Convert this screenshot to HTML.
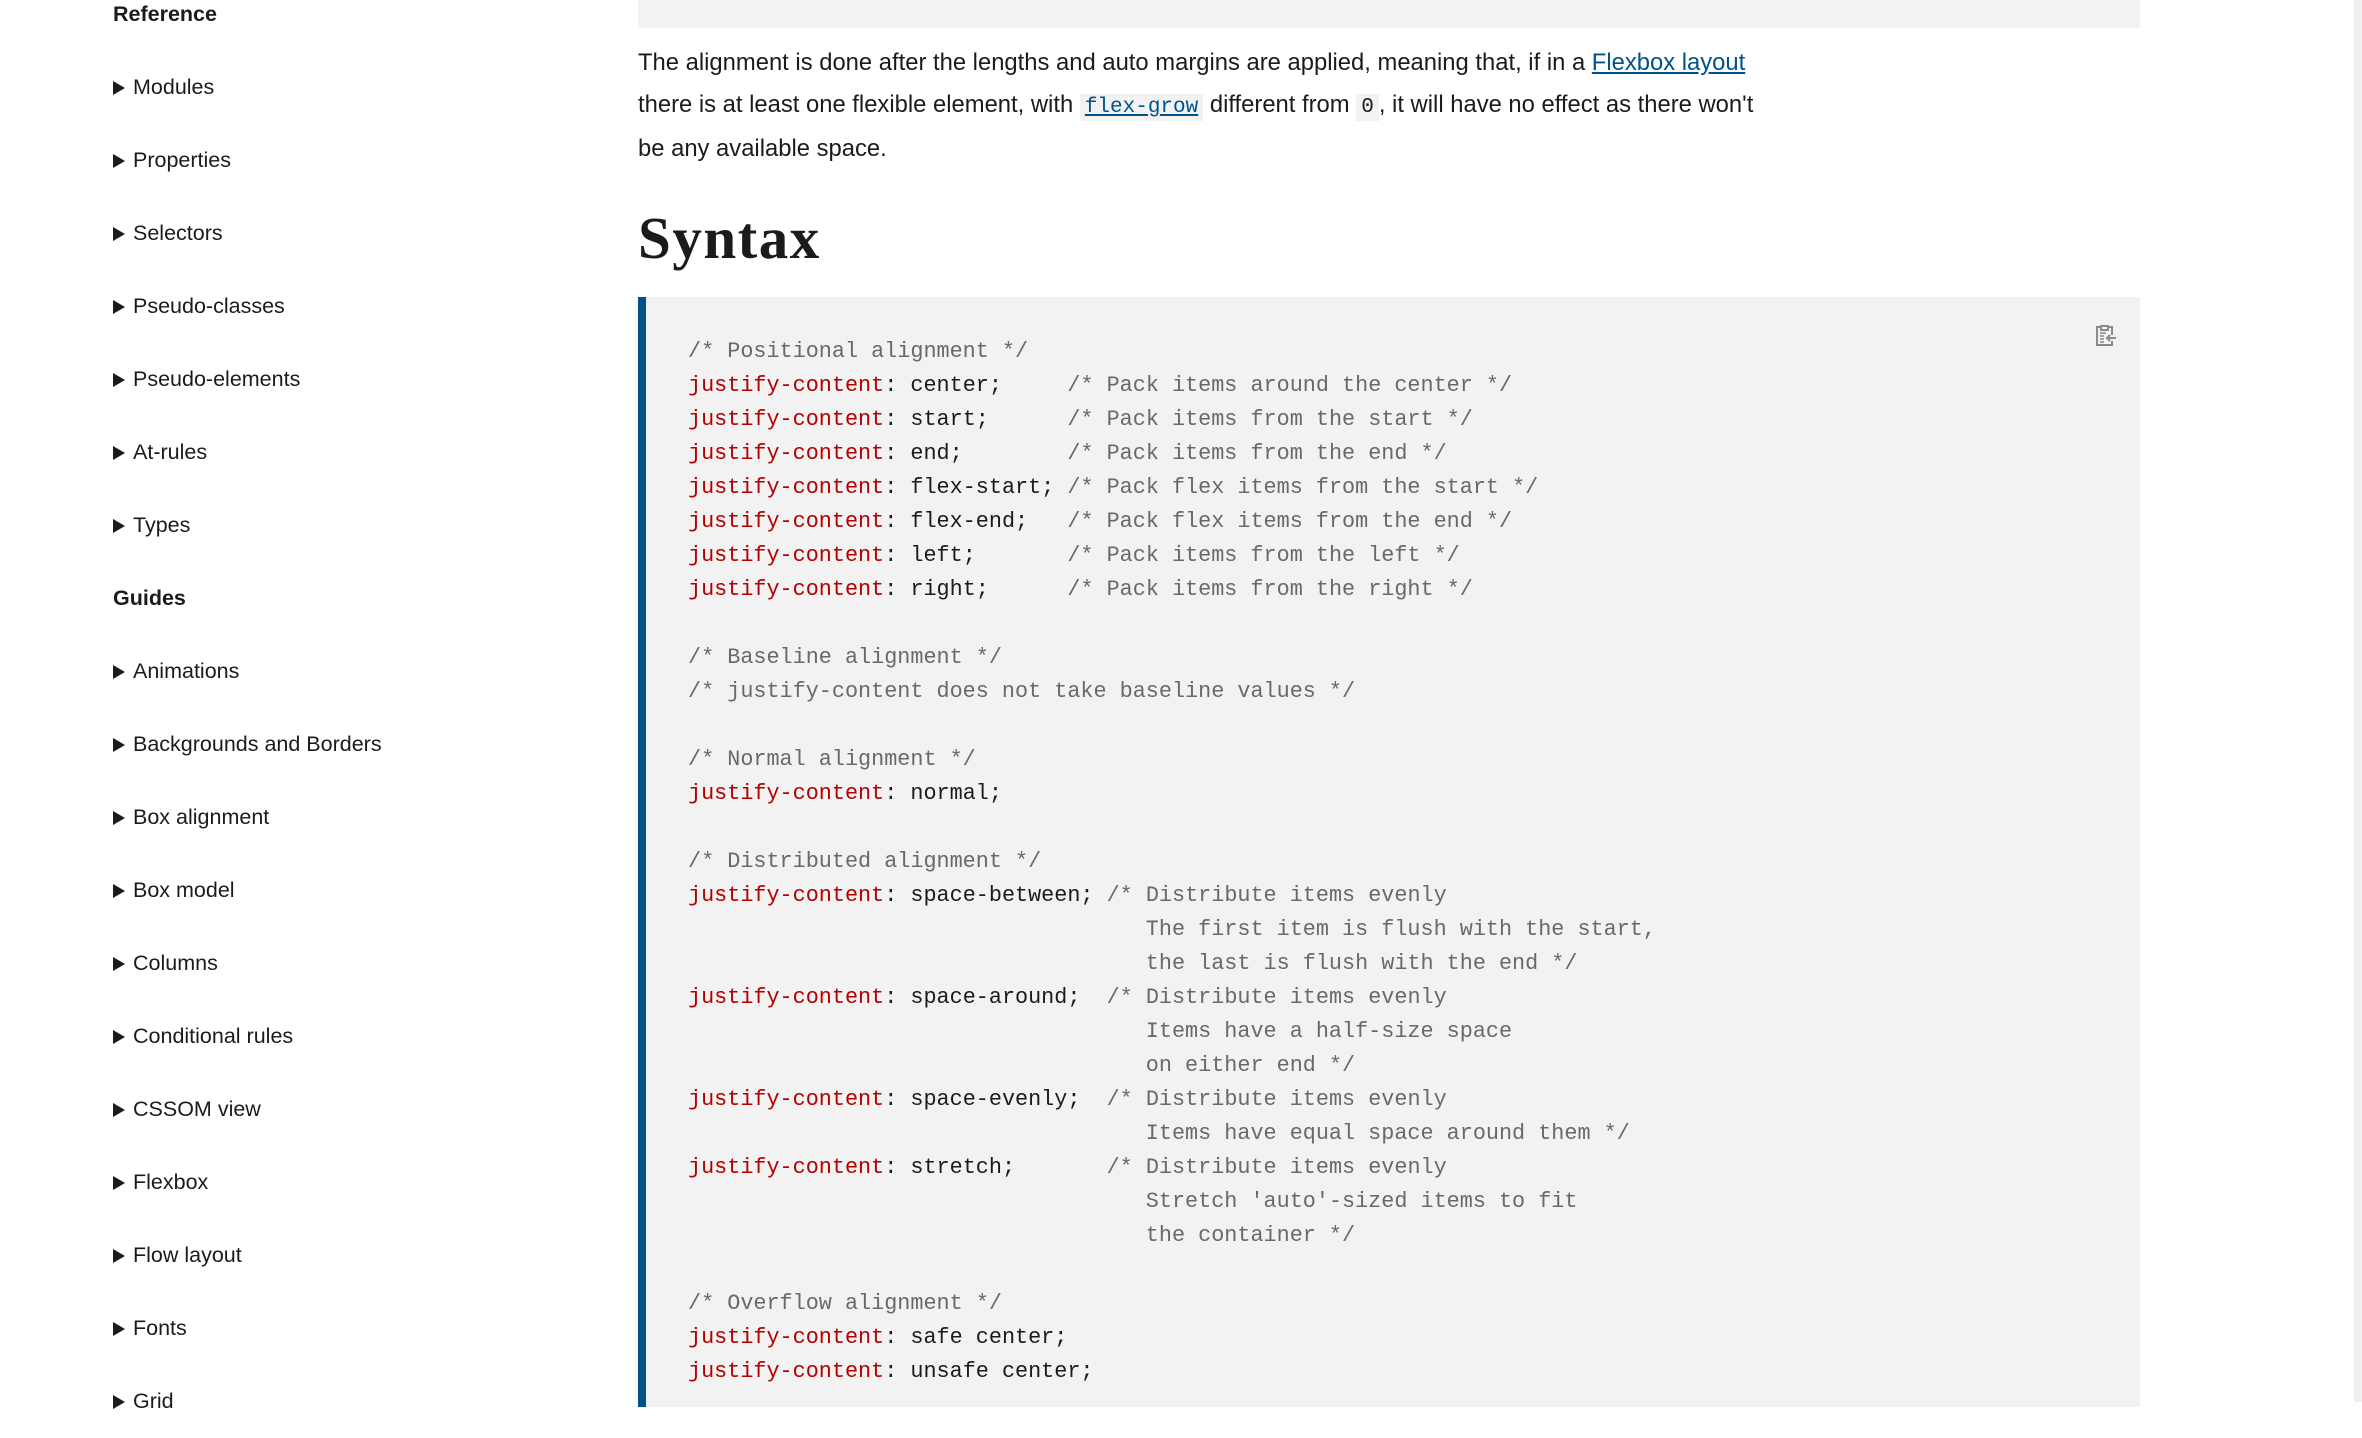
<!DOCTYPE html>
<html><head><meta charset="utf-8"><style>
*{margin:0;padding:0;box-sizing:border-box}
body{width:2362px;height:1402px;overflow:hidden;background:#fff;font-family:"Liberation Sans",sans-serif;color:#1b1b1b;position:relative}
.side{position:absolute;left:113px;top:-22.5px;font-size:21.5px;line-height:73px}
.side div{height:73px;white-space:nowrap}
.side .h{font-weight:bold;margin-left:0}
.side .i::before{content:"";display:inline-block;width:0;height:0;border-left:12px solid #1b1b1b;border-top:7.5px solid transparent;border-bottom:7.5px solid transparent;margin-right:8px;vertical-align:-1px}
.topbox{position:absolute;left:638px;top:0;width:1502px;height:28px;background:#f2f2f2}
.p{position:absolute;left:638px;top:42px;width:1200px;font-size:23.8px;line-height:41.7px}
.p a{color:#00538a;text-decoration:underline}
.p code{font-family:"Liberation Mono",monospace;font-size:21px;background:#f2f2f2;padding:2px 5px}
.p code a{color:#00538a}
h2{position:absolute;left:638px;top:203px;font-family:"Liberation Serif",serif;font-weight:bold;font-size:59px;letter-spacing:1.5px;line-height:70px;color:#1b1b1b}
.code{position:absolute;left:638px;top:297px;width:1502px;height:1110px;background:#f2f2f2;border-left:8px solid #00538a}
pre{position:absolute;left:42px;top:38px;font-family:"Liberation Mono",monospace;font-size:21.8px;line-height:34px;color:#1b1b1b}
.k{color:#b30000}.c{color:#696969}
.scroll{position:absolute;left:2354px;top:0;width:8px;height:1402px;background:#f0f0f0}
</style></head><body>
<div class="side">
<div class="h">Reference</div>
<div class="i">Modules</div>
<div class="i">Properties</div>
<div class="i">Selectors</div>
<div class="i">Pseudo-classes</div>
<div class="i">Pseudo-elements</div>
<div class="i">At-rules</div>
<div class="i">Types</div>
<div class="h">Guides</div>
<div class="i">Animations</div>
<div class="i">Backgrounds and Borders</div>
<div class="i">Box alignment</div>
<div class="i">Box model</div>
<div class="i">Columns</div>
<div class="i">Conditional rules</div>
<div class="i">CSSOM view</div>
<div class="i">Flexbox</div>
<div class="i">Flow layout</div>
<div class="i">Fonts</div>
<div class="i">Grid</div>
</div>
<div class="topbox"></div>
<div class="p">The alignment is done after the lengths and auto margins are applied, meaning that, if in a <a>Flexbox layout</a><br>there is at least one flexible element, with <code><a>flex-grow</a></code> different from <code>0</code>, it will have no effect as there won't<br>be any available space.</div>
<h2>Syntax</h2>
<div class="code">
<svg style="position:absolute;left:1447px;top:26px" width="24" height="24" viewBox="0 0 24 24" fill="none" stroke="#8a8a8a" stroke-width="2"><path d="M8 4h-4v18h15v-4M15 4h4v8M8 3h7v4h-7z"/><path d="M7 10h6M7 13h4M7 16h4M7 19h4" stroke-width="1.5"/><path d="M23 15h-9M17 12l-3 3 3 3" stroke-width="2"/></svg>
<pre><span class="c">/* Positional alignment */</span>
<span class="k">justify-content</span>: center;     <span class="c">/* Pack items around the center */</span>
<span class="k">justify-content</span>: start;      <span class="c">/* Pack items from the start */</span>
<span class="k">justify-content</span>: end;        <span class="c">/* Pack items from the end */</span>
<span class="k">justify-content</span>: flex-start; <span class="c">/* Pack flex items from the start */</span>
<span class="k">justify-content</span>: flex-end;   <span class="c">/* Pack flex items from the end */</span>
<span class="k">justify-content</span>: left;       <span class="c">/* Pack items from the left */</span>
<span class="k">justify-content</span>: right;      <span class="c">/* Pack items from the right */</span>

<span class="c">/* Baseline alignment */</span>
<span class="c">/* justify-content does not take baseline values */</span>

<span class="c">/* Normal alignment */</span>
<span class="k">justify-content</span>: normal;

<span class="c">/* Distributed alignment */</span>
<span class="k">justify-content</span>: space-between; <span class="c">/* Distribute items evenly
                                   The first item is flush with the start,
                                   the last is flush with the end */</span>
<span class="k">justify-content</span>: space-around;  <span class="c">/* Distribute items evenly
                                   Items have a half-size space
                                   on either end */</span>
<span class="k">justify-content</span>: space-evenly;  <span class="c">/* Distribute items evenly
                                   Items have equal space around them */</span>
<span class="k">justify-content</span>: stretch;       <span class="c">/* Distribute items evenly
                                   Stretch 'auto'-sized items to fit
                                   the container */</span>

<span class="c">/* Overflow alignment */</span>
<span class="k">justify-content</span>: safe center;
<span class="k">justify-content</span>: unsafe center;
</pre>
</div>
<div class="scroll"></div>
</body></html>
